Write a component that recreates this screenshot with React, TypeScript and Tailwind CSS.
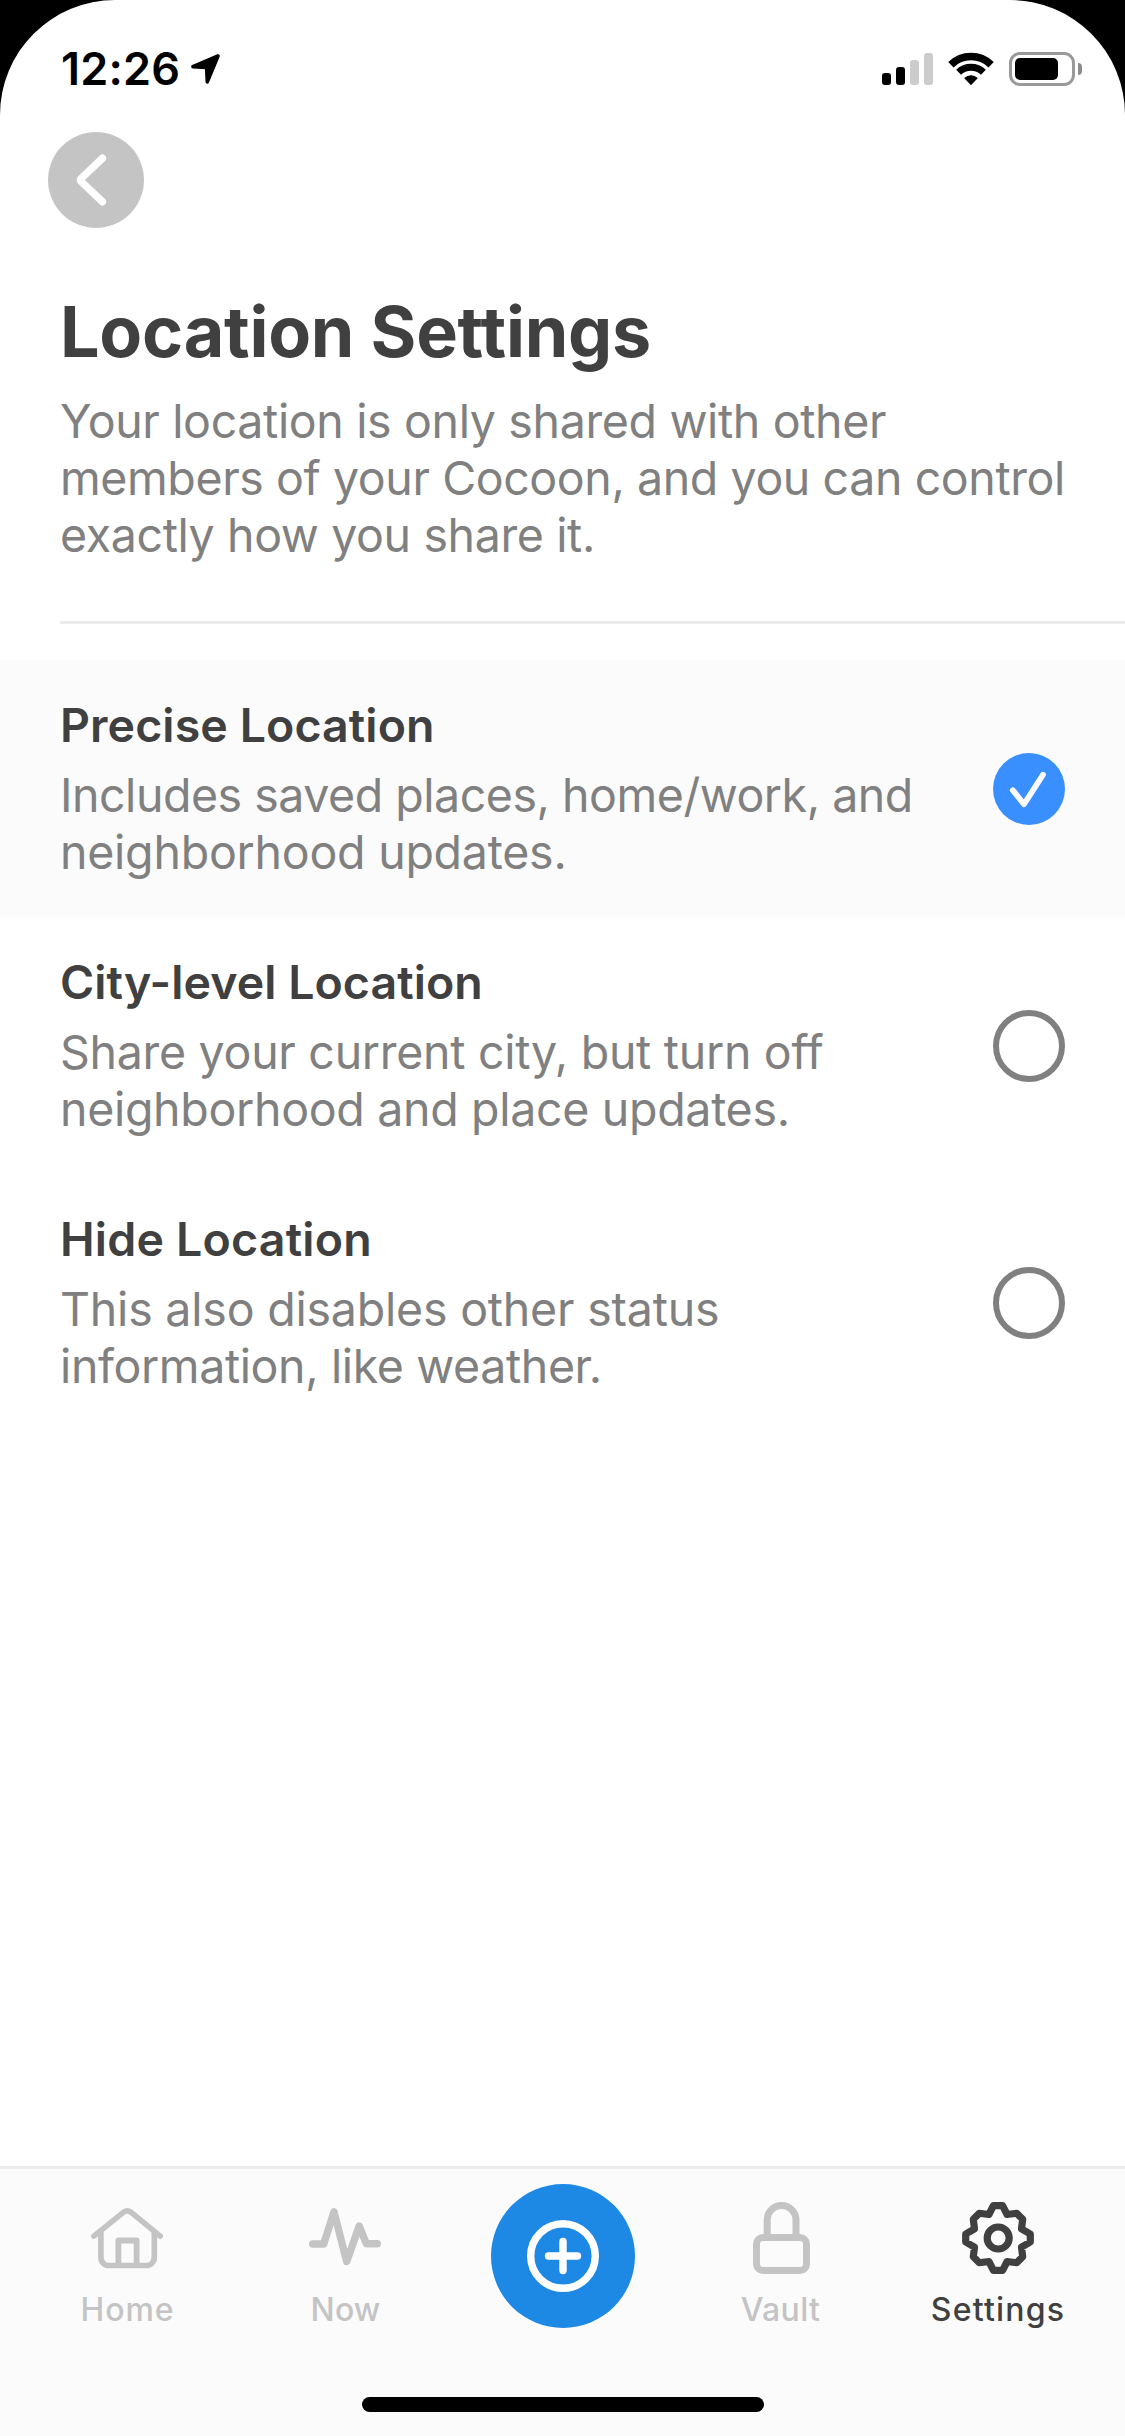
import type { ReactNode } from "react";

type Line = { text: string; tracking: string };

type Option = {
  title: Line;
  lines: Line[];
  selected: boolean;
};

const INTRO: Line[] = [
  { text: "Your location is only shared with other", tracking: "tracking-[-0.353px]" },
  { text: "members of your Cocoon, and you can control", tracking: "tracking-[-0.405px]" },
  { text: "exactly how you share it.", tracking: "tracking-[-0.375px]" },
];

const OPTIONS: Option[] = [
  {
    title: { text: "Precise Location", tracking: "tracking-[0.09px]" },
    lines: [
      { text: "Includes saved places, home/work, and", tracking: "tracking-[-0.47px]" },
      { text: "neighborhood updates.", tracking: "tracking-[-0.24px]" },
    ],
    selected: true,
  },
  {
    title: { text: "City-level Location", tracking: "tracking-[0.05px]" },
    lines: [
      { text: "Share your current city, but turn off", tracking: "tracking-[-0.29px]" },
      { text: "neighborhood and place updates.", tracking: "tracking-[-0.31px]" },
    ],
    selected: false,
  },
  {
    title: { text: "Hide Location", tracking: "tracking-[0.2px]" },
    lines: [
      { text: "This also disables other status", tracking: "tracking-[-0.21px]" },
      { text: "information, like weather.", tracking: "tracking-[-0.38px]" },
    ],
    selected: false,
  },
];

function Paragraph({ lines }: { lines: Line[] }) {
  return (
    <p className="text-[46.5px] leading-[57px] text-[#808080]">
      {lines.map((line) => (
        <span key={line.text} className={`block whitespace-nowrap ${line.tracking}`}>
          {line.text}
        </span>
      ))}
    </p>
  );
}

function StatusBar() {
  return (
    <div className="flex h-[132px] items-start justify-between pt-[52px] pr-[43px] pl-[61px]">
      <div className="flex items-start">
        <span className="-mt-[11px] w-[129px] text-[45px] leading-[56px] font-semibold tracking-[0.2px]">
          12:26
        </span>
        <svg className="h-[34px] w-[32px]" viewBox="0 0 32 34">
          <path
            d="M2.9 14.6 28 4 17.3 29.8 16.6 15.4Z"
            fill="black"
            stroke="black"
            strokeWidth="3.6"
            strokeLinejoin="round"
          />
        </svg>
      </div>
      <div className="flex h-[34px] items-start">
        <div className="mt-px flex h-[32px] items-end gap-[5px]">
          <div className="h-[12px] w-[9px] rounded-[3px] bg-black" />
          <div className="h-[18px] w-[9px] rounded-[3px] bg-black" />
          <div className="h-[25px] w-[9px] rounded-[3px] bg-[#cccccc]" />
          <div className="h-[32px] w-[9px] rounded-[3px] bg-[#cccccc]" />
        </div>
        <svg className="ml-[15px] h-[34px] w-[46px]" viewBox="0 0 46 34" fill="none" stroke="black">
          <path d="M2.9 12.7a28.9 28.9 0 0 1 40.2 0" strokeWidth="7.6" />
          <path d="M10.6 20.3a18 18 0 0 1 24.8 0" strokeWidth="7" />
          <path
            d="M23 32.3 17 26.2a8.6 8.6 0 0 1 12 0Z"
            fill="black"
            strokeWidth="1.2"
            strokeLinejoin="round"
          />
        </svg>
        <div className="ml-[15px] flex items-center">
          <div className="h-[34px] w-[66px] rounded-[11px] border-[3px] border-[#999999] p-[3px]">
            <div className="h-[22px] w-[43px] rounded-[5px] bg-black" />
          </div>
          <div className="ml-[3px] h-[12px] w-[4px] rounded-r-full bg-[#8c8c8c]" />
        </div>
      </div>
    </div>
  );
}

function Radio({ selected }: { selected: boolean }) {
  if (!selected) {
    return <div className="size-[72px] shrink-0 rounded-full border-[6px] border-[#808080]" />;
  }
  return (
    <div className="size-[72px] shrink-0 rounded-full bg-[#3a8fff]">
      <svg viewBox="0 0 72 72" fill="none">
        <path
          d="M19.8 37.2 31 51.2 50 21.8"
          stroke="#fbfbfb"
          strokeWidth="5.8"
          strokeLinecap="round"
          strokeLinejoin="round"
        />
      </svg>
    </div>
  );
}

function Tab({
  label,
  tracking,
  active = false,
  children,
}: {
  label: string;
  tracking: string;
  active?: boolean;
  children: ReactNode;
}) {
  return (
    <div className={`flex flex-col items-center pt-[33px] ${active ? "text-[#404040]" : "text-[#c4c4c4]"}`}>
      <svg
        className="size-[72px]"
        viewBox="0 0 72 72"
        fill="none"
        stroke="currentColor"
        strokeLinecap="round"
        strokeLinejoin="round"
      >
        {children}
      </svg>
      <span className={`mt-[16px] pl-px text-[32px] leading-[40px] font-medium ${tracking}`}>{label}</span>
    </div>
  );
}

function TabBar() {
  return (
    <nav className="flex h-[270px] flex-col border-t-[3px] border-[#ebebeb] bg-[#fbfbfb]">
      <div className="grid h-[228px] grid-cols-[218px_218px_217px_218px_217px] pl-[18px]">
        <Tab label="Home" tracking="tracking-[0.9px]">
          <path d="M2.9 34.1 32.6 10.1Q36.3 7.6 39.9 10.1L69.2 34.1" strokeWidth="5.6" />
          <path d="M9.9 30.5V55.5a8 8 0 0 0 8 8H55.3a8 8 0 0 0 8-8V30.5" strokeWidth="5.6" />
          <path d="M27.4 63V38.5H45.6V63" strokeWidth="5.8" />
        </Tab>
        <Tab label="Now" tracking="tracking-[0.1px]">
          <path d="M3.7 42H14.7L25 9.8 37.7 59.5 50.2 24 57.3 41.7H68.3" strokeWidth="7.4" />
        </Tab>
        <div className="flex justify-center pt-[15px]">
          <div className="size-[144px] rounded-full bg-[#1e88e5]">
            <svg viewBox="0 0 144 144" fill="none" stroke="white" strokeWidth="7.4" strokeLinecap="round">
              <circle cx="72" cy="72" r="32.3" />
              <path d="M72 57.5v29M57.5 72h29" />
            </svg>
          </div>
        </div>
        <Tab label="Vault" tracking="tracking-[0.3px]">
          <rect x="12.5" y="35.5" width="50" height="33" rx="6.5" strokeWidth="7" />
          <path d="M23.2 35V18a14.4 14.4 0 0 1 28.8 0V35" strokeWidth="7" />
        </Tab>
        <Tab label="Settings" tracking="tracking-[1.2px]" active>
          <path
            d="M31.4 3.7H40.6L45.1 12.5 54.7 11.3 60.7 17.3 59.5 26.9 68.3 32V40L59.5 45.1 60.7 54.7 54.7 60.7 45.1 59.5 40.6 68.3H31.4L26.9 59.5 17.3 60.7 11.3 54.7 12.5 45.1 3.7 40V32L12.5 26.9 11.3 17.3 17.3 11.3 26.9 12.5Z"
            strokeWidth="7.2"
          />
          <circle cx="36.2" cy="36" r="11" strokeWidth="7.2" />
        </Tab>
      </div>
      <div className="mx-auto h-[15px] w-[402px] rounded-full bg-black" />
    </nav>
  );
}

export default function App() {
  return (
    <div className="h-[2436px] w-[1125px] bg-black">
      <div className="flex h-full flex-col overflow-hidden rounded-t-[115px] bg-white font-['Inter',sans-serif] text-black">
        <StatusBar />
        <header className="pl-[60px]">
          <button className="-ml-[12px] block size-[96px] rounded-full bg-[#c4c4c4]" aria-label="Back">
            <svg viewBox="0 0 96 96" fill="none">
              <path
                d="M54.5 26.2 33.3 46.4Q31.7 48 33.3 49.6L54.5 69.8"
                stroke="white"
                strokeWidth="7.4"
                strokeLinecap="round"
                strokeLinejoin="round"
              />
            </svg>
          </button>
          <h1 className="mt-[62px] text-[70px] leading-[84px] font-bold tracking-[-0.24px] text-[#404040]">
            Location Settings
          </h1>
          <div className="mt-[19px] border-b-[3px] border-[#ebebeb] pb-[57px]">
            <Paragraph lines={INTRO} />
          </div>
        </header>
        <main className="mt-[36px] flex-1">
          {OPTIONS.map((option) => (
            <section
              key={option.title.text}
              className={`flex h-[257px] items-center justify-between px-[60px] ${option.selected ? "bg-[#fbfbfb]" : ""}`}
            >
              <div>
                <h2
                  className={`mb-[13px] pt-px text-[46.5px] leading-[57px] font-semibold text-[#404040] ${option.title.tracking}`}
                >
                  {option.title.text}
                </h2>
                <Paragraph lines={option.lines} />
              </div>
              <Radio selected={option.selected} />
            </section>
          ))}
        </main>
        <TabBar />
      </div>
    </div>
  );
}
